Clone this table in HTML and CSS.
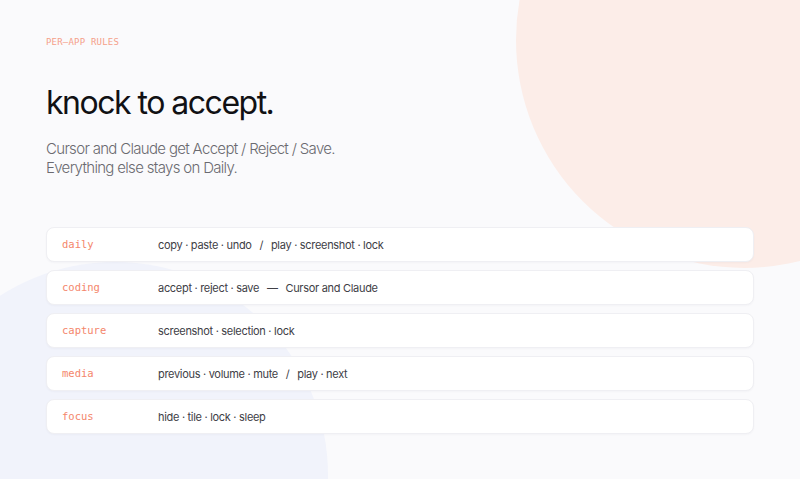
FILE: index.html
```html
<!DOCTYPE html>
<html>
<head>
<meta charset="utf-8">
<link rel="stylesheet" href="styles.css">
</head>
<body>
<div class="blob blob-peach"></div>
<div class="blob blob-blue"></div>
<main class="page">
  <div class="eyebrow">PER–APP RULES</div>
  <h1 class="title">knock to accept.</h1>
  <p class="subtitle">Cursor and Claude get Accept / Reject / Save.<br>Everything else stays on Daily.</p>
  <ul class="rules">
    <li class="rule"><span class="label">daily</span><span class="desc">copy · paste · undo <span class="sep">/</span> play · screenshot · lock</span></li>
    <li class="rule"><span class="label">coding</span><span class="desc">accept · reject · save <span class="sep">—</span> Cursor and Claude</span></li>
    <li class="rule"><span class="label">capture</span><span class="desc">screenshot · selection · lock</span></li>
    <li class="rule"><span class="label">media</span><span class="desc">previous · volume · mute <span class="sep">/</span> play · next</span></li>
    <li class="rule"><span class="label">focus</span><span class="desc">hide · tile · lock · sleep</span></li>
  </ul>
</main>
</body>
</html>
```
FILE: styles.css
```css
html, body {
  margin: 0;
  padding: 0;
}
body {
  width: 800px;
  height: 479px;
  overflow: hidden;
  position: relative;
  background: #fafafc;
  font-family: Inter, "Noto Sans", sans-serif;
}
.blob {
  position: absolute;
  border-radius: 50%;
  z-index: 0;
}
.blob-peach {
  left: 516px;
  top: -188px;
  width: 456px;
  height: 456px;
  background: #fcede8;
}
.blob-blue {
  left: -98px;
  top: 262px;
  width: 426px;
  height: 426px;
  background: #f1f3fb;
}
.page {
  position: relative;
  z-index: 1;
  padding: 36px 46px 0 46px;
}
.eyebrow {
  font-family: "DejaVu Sans Mono", monospace;
  font-size: 9px;
  letter-spacing: 0.2px;
  color: #f5a08a;
  line-height: 12px;
}
.title {
  margin: 35px 0 0 0;
  font-size: 32px;
  font-weight: 400;
  color: #111114;
  line-height: 40px;
  letter-spacing: -1.5px;
}
.subtitle {
  margin: 16px 0 0 0;
  font-size: 15px;
  font-weight: 300;
  line-height: 19px;
  color: #6a6a70;
  letter-spacing: -0.68px;
}
.rules {
  list-style: none;
  margin: 50px 0 0 0;
  padding: 0;
  width: 708px;
  display: flex;
  flex-direction: column;
  gap: 8px;
}
.rule {
  display: flex;
  align-items: center;
  height: 33px;
  padding: 0 15px;
  background: #ffffff;
  border: 1px solid #efeff3;
  border-radius: 8px;
  box-shadow: 0 1px 2px rgba(20, 20, 60, 0.03);
}
.label {
  width: 96px;
  flex: none;
  font-family: "DejaVu Sans Mono", monospace;
  font-size: 10.5px;
  color: #f4866b;
  position: relative;
  top: -1px;
}
.desc {
  font-size: 11px;
  color: #404046;
  letter-spacing: -0.3px;
  white-space: pre;
}
.sep {
  margin: 0 5px;
}
```
